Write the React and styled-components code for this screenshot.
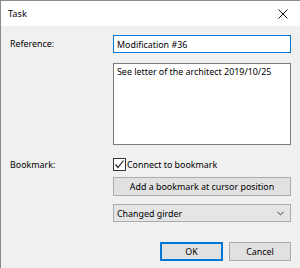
import React from 'react';
import styled, { createGlobalStyle } from 'styled-components';

const GlobalStyle = createGlobalStyle`
  html, body {
    margin: 0;
    padding: 0;
    background: #ffffff;
    overflow: hidden;
  }
  body {
    font-family: "Noto Sans", "Open Sans", sans-serif;
    font-size: 8.9px;
    color: #000;
  }
`;

const Window = styled.div`
  width: 302px;
  height: 270px;
  box-sizing: border-box;
  border: 1px solid #8a8a8a;
  background: #f0f0f0;
  display: flex;
  flex-direction: column;
`;

const TitleBar = styled.div`
  height: 25px;
  background: #ffffff;
  display: flex;
  align-items: center;
  justify-content: space-between;
  padding: 0 0 0 7px;
  flex-shrink: 0;
`;

const Title = styled.span`
  font-size: 9.2px;
`;

const CloseButton = styled.div`
  width: 30px;
  height: 25px;
  display: flex;
  align-items: center;
  justify-content: center;
  margin-right: 3px;
`;

const Body = styled.div`
  padding: 9px 0 0 9px;
  display: flex;
  flex-direction: column;
`;

const Row = styled.div`
  display: flex;
  align-items: ${(p) => p.align || 'center'};
  margin-top: ${(p) => p.gap || 0}px;
`;

const Label = styled.div`
  width: 103px;
  flex-shrink: 0;
  padding-top: ${(p) => p.offset || 0}px;
`;

const Field = styled.div`
  width: 178px;
  display: flex;
  flex-direction: column;
`;

const TextBox = styled.div`
  box-sizing: border-box;
  height: 18px;
  border: 1px solid #0078d7;
  background: #fff;
  padding: 0 3px;
  display: flex;
  align-items: center;
`;

const TextArea = styled.div`
  box-sizing: border-box;
  width: 100%;
  height: 82px;
  border: 1px solid #7a7a7a;
  background: #fff;
  padding: 2px 3px;
  line-height: 12px;
`;

const CheckRow = styled.label`
  display: flex;
  align-items: center;
  gap: 1px;
  height: 14px;
`;

const CheckBox = styled.span`
  box-sizing: border-box;
  width: 13px;
  height: 13px;
  border: 1px solid #333;
  background: #fff;
  display: flex;
  align-items: center;
  justify-content: center;
`;

const Button = styled.div`
  box-sizing: border-box;
  height: 19px;
  width: ${(p) => (p.width ? `${p.width}px` : 'auto')};
  border: 1px solid ${(p) => (p.primary ? '#0078d7' : '#adadad')};
  box-shadow: ${(p) => (p.primary ? 'inset 0 0 0 1px #0078d7' : 'none')};
  background: #e1e1e1;
  display: flex;
  align-items: center;
  justify-content: center;
`;

const Select = styled.div`
  box-sizing: border-box;
  width: 100%;
  height: 18px;
  border: 1px solid #acacac;
  background: #e5e5e5;
  display: flex;
  align-items: center;
  justify-content: space-between;
  padding: 0 6px 0 3px;
`;

const Footer = styled.div`
  display: flex;
  justify-content: flex-end;
  gap: 6px;
  width: 281px;
  margin-top: 20px;
`;

const CloseIcon = () => (
  <svg width="10" height="10" viewBox="0 0 10 10">
    <path d="M0.5 0.5 L9.5 9.5 M9.5 0.5 L0.5 9.5" stroke="#111" strokeWidth="1" fill="none" />
  </svg>
);

const CheckIcon = () => (
  <svg width="11" height="11" viewBox="0 0 11 11">
    <path d="M1.5 5.5 L4 8.5 L9.5 1.5" stroke="#222" strokeWidth="1.2" fill="none" />
  </svg>
);

const ChevronIcon = () => (
  <svg width="7" height="5" viewBox="0 0 7 5">
    <path d="M0.5 0.8 L3.5 3.8 L6.5 0.8" stroke="#707070" strokeWidth="1.1" fill="none" />
  </svg>
);

export default function App() {
  return (
    <>
      <GlobalStyle />
      <Window>
        <TitleBar>
          <Title>Task</Title>
          <CloseButton>
            <CloseIcon />
          </CloseButton>
        </TitleBar>
        <Body>
          <Row align="flex-start">
            <Label offset={2}>Reference:</Label>
            <Field>
              <TextBox>Modification #36</TextBox>
              <Row gap={10}>
                <TextArea>See letter of the architect 2019/10/25</TextArea>
              </Row>
            </Field>
          </Row>
          <Row gap={12}>
            <Label>Bookmark:</Label>
            <CheckRow>
              <CheckBox>
                <CheckIcon />
              </CheckBox>
              Connect to bookmark
            </CheckRow>
          </Row>
          <Row gap={6}>
            <Label />
            <Field>
              <Button>Add a bookmark at cursor position</Button>
              <Row gap={8}>
                <Select>
                  <span>Changed girder</span>
                  <ChevronIcon />
                </Select>
              </Row>
            </Field>
          </Row>
          <Footer>
            <Button primary width={63}>OK</Button>
            <Button width={62}>Cancel</Button>
          </Footer>
        </Body>
      </Window>
    </>
  );
}
